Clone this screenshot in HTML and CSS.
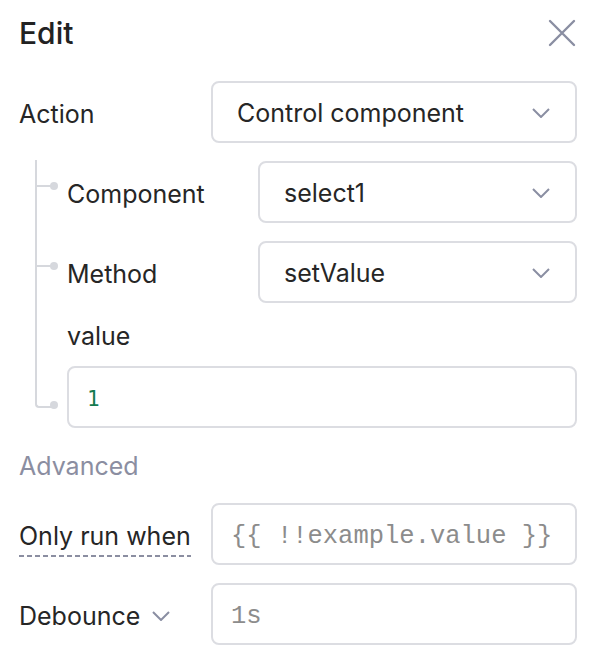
FILE: index.html
```html
<!DOCTYPE html>
<html>
<head>
<meta charset="utf-8">
<link rel="stylesheet" href="styles.css">
</head>
<body>
<div class="panel">
  <div class="header">
    <h1 class="title">Edit</h1>
    <button class="close" aria-label="Close">
      <svg width="28" height="28" viewBox="0 0 28 28"><path d="M2 2 L26 26 M26 2 L2 26" stroke="#8a8ea2" stroke-width="2.4" fill="none" stroke-linecap="round"/></svg>
    </button>
  </div>

  <div class="row action-row">
    <div class="label">Action</div>
    <div class="select"><span>Control component</span><svg class="chev" width="18" height="10" viewBox="0 0 18 10"><path d="M1 1 L9 9 L17 1" stroke="#8a8ea2" stroke-width="2" fill="none"/></svg></div>
  </div>

  <div class="tree">
    <div class="row tree-row">
      <span class="branch"></span>
      <div class="label">Component</div>
      <div class="select"><span>select1</span><svg class="chev" width="18" height="10" viewBox="0 0 18 10"><path d="M1 1 L9 9 L17 1" stroke="#8a8ea2" stroke-width="2" fill="none"/></svg></div>
    </div>
    <div class="row tree-row">
      <span class="branch"></span>
      <div class="label">Method</div>
      <div class="select"><span>setValue</span><svg class="chev" width="18" height="10" viewBox="0 0 18 10"><path d="M1 1 L9 9 L17 1" stroke="#8a8ea2" stroke-width="2" fill="none"/></svg></div>
    </div>
    <div class="value-block">
      <span class="branch last"></span>
      <div class="label value-label">value</div>
      <div class="input code-input"><span class="code-green">1</span></div>
    </div>
  </div>

  <div class="advanced">Advanced</div>

  <div class="row adv-row">
    <div class="label"><span class="dashed">Only run when</span></div>
    <div class="input"><span class="placeholder">{{ !!example.value }}</span></div>
  </div>
  <div class="row adv-row second">
    <div class="label debounce">Debounce <svg class="chev small" width="18" height="10" viewBox="0 0 18 10"><path d="M1 1 L9 9 L17 1" stroke="#8a8ea2" stroke-width="2" fill="none"/></svg></div>
    <div class="input"><span class="placeholder">1s</span></div>
  </div>
</div>
</body>
</html>
```

FILE: styles.css
```css
* { box-sizing: border-box; }
html, body { margin: 0; padding: 0; background: #ffffff; }
body {
  font-family: Inter, "Noto Sans", sans-serif;
  color: #262626;
  font-size: 25px;
  width: 592px;
}
.panel {
  padding: 14px 15px 0 19px;
}
.header {
  display: flex;
  justify-content: space-between;
  align-items: center;
  height: 38px;
}
.title {
  margin: 0;
  font-size: 30px;
  font-weight: 500;
  line-height: 38px;
  color: #222;
}
.close {
  border: 0;
  background: none;
  padding: 0;
  margin-right: 1px;
  width: 28px;
  height: 28px;
  display: flex;
}
.row {
  display: grid;
  grid-template-columns: 192px 1fr;
  align-items: center;
}
.action-row { margin-top: 29px; }
.label {
  line-height: 30px;
  padding-top: 3px;
  color: #262626;
}
.select, .input {
  height: 62px;
  border: 2px solid #dcdde2;
  border-radius: 8px;
  display: flex;
  align-items: center;
  justify-content: space-between;
  background: #fff;
}
.select { padding: 2px 25px 0 24px; }
.input { padding: 4px 18px 0; }
.chev { display: block; }

.tree {
  position: relative;
  margin-top: 18px;
  margin-left: 16px;
  padding-left: 32px;
}
.tree::before {
  content: "";
  position: absolute;
  left: 0;
  top: -1px;
  bottom: 26px;
  width: 2px;
  background: #d6d8dd;
}
.tree-row {
  position: relative;
  grid-template-columns: 191px 1fr;
  margin-bottom: 18px;
}
.branch {
  position: absolute;
  left: -32px;
  top: 24px;
  width: 20px;
  height: 2px;
  background: #d6d8dd;
}
.branch::after {
  content: "";
  position: absolute;
  right: -3px;
  top: -3px;
  width: 8px;
  height: 8px;
  border-radius: 50%;
  background: #d6d8dd;
}
.value-block { position: relative; }
.branch.last {
  top: auto;
  bottom: 20px;
  left: -32px;
  width: 20px;
  height: 8px;
  background: none;
  border-left: 2px solid #d6d8dd;
  border-bottom: 2px solid #d6d8dd;
  border-bottom-left-radius: 4px;
}
.branch.last::after { top: 1px; }
.value-label { margin-bottom: 15px; padding-top: 0; }
.code-green {
  font-family: "DejaVu Sans Mono", monospace;
  font-size: 21px;
  color: #137a4f;
}
.advanced {
  margin-top: 23px;
  line-height: 30px;
  color: #8b8ea1;
}
.adv-row { margin-top: 22px; }
.adv-row.second { margin-top: 18px; }
.placeholder {
  font-family: "Liberation Mono", monospace;
  font-size: 25.5px;
  color: #8c8c8c;
}
.dashed {
  padding-bottom: 6px;
  background-image: repeating-linear-gradient(90deg, #8b8ea1 0 5px, transparent 5px 8px);
  background-size: 100% 2px;
  background-repeat: no-repeat;
  background-position: left bottom;
}
.debounce {
  display: flex;
  align-items: center;
  gap: 12px;
}
```
